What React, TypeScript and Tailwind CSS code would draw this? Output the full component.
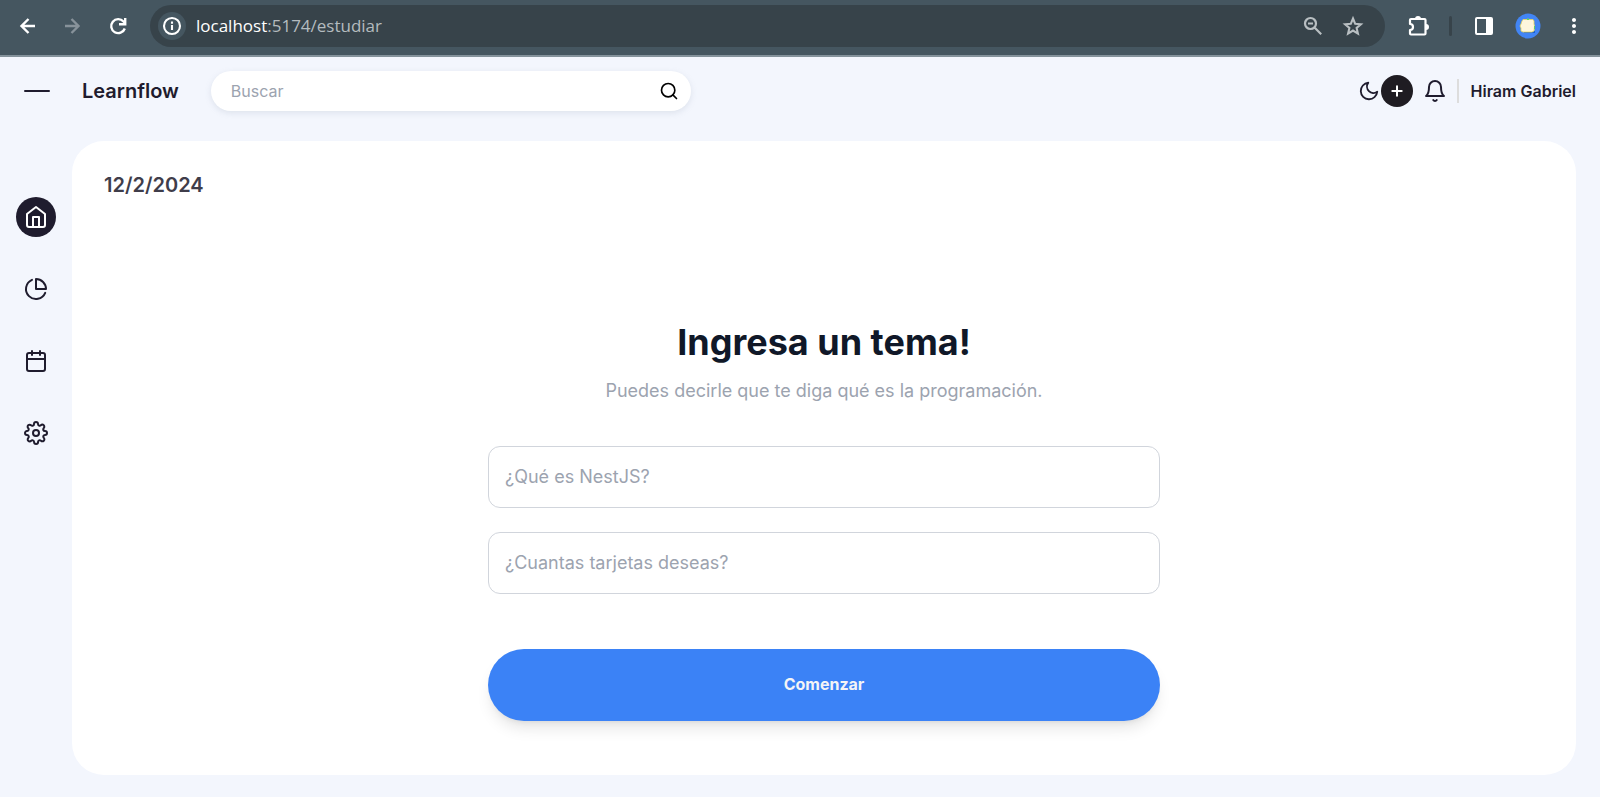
import type { ReactNode } from "react";
import { FiBell, FiCalendar, FiHome, FiMoon, FiPieChart, FiPlus, FiSearch, FiSettings } from "react-icons/fi";
import { MdMoreVert } from "react-icons/md";

function IconButton({ label, className = "", children }: { label: string; className?: string; children: ReactNode }) {
  return (
    <button type="button" aria-label={label} className={`flex shrink-0 items-center justify-center ${className}`}>
      {children}
    </button>
  );
}

function LineIcon({ d, width = 2.4 }: { d: string; width?: number }) {
  return (
    <svg width="24" height="24" viewBox="0 0 24 24" fill="none" stroke="currentColor" strokeWidth={width} aria-hidden="true">
      <path d={d} />
    </svg>
  );
}

function PuzzleIcon() {
  return (
    <svg width="24" height="24" viewBox="0 0 24 24" aria-hidden="true">
      <path d="M4 5h13.5q1 0 1 1v13.5q0 1-1 1H4q-1 0-1-1V16a3 3 0 0 0 0-6V6q0-1 1-1z" fill="none" stroke="white" strokeWidth="2.2" strokeLinejoin="round" />
      <path d="M8 5a3 3 0 0 1 6 0zM19 10a3 3 0 0 1 0 6z" fill="white" />
    </svg>
  );
}

function SidePanelIcon() {
  return (
    <svg width="18" height="18" viewBox="0 0 18 18" aria-hidden="true">
      <rect x="1" y="1" width="16" height="16" rx="1" fill="none" stroke="white" strokeWidth="2" />
      <path d="M11 1h6v16h-6z" fill="white" />
    </svg>
  );
}

function ProfileIcon() {
  return (
    <svg width="26" height="26" viewBox="0 0 26 26" aria-hidden="true">
      <circle cx="13" cy="13" r="12.5" fill="#4285f4" />
      <path d="M9 18h11v2H9z" fill="#1c62cf" />
      <path d="M7 8l1-1.500h4l1-.5 1 .5h4l1 1.500v3l.5 2-.5 5-2 1h-9l-2-1v-3l-1-2 1-2z" fill="#fdf6dc" stroke="#e8d65b" strokeWidth="0.8" />
      <path d="M12 5.500h2v1.500h-2zM19 13h1v3h-1z" fill="#5bd066" />
    </svg>
  );
}

function BrowserBar() {
  return (
    <div className="flex h-[57px] items-center border-b-2 border-[#84929b] bg-[#455660] pr-3.5 pb-1 pl-4 text-white">
      <IconButton label="Atrás" className="size-6"><LineIcon d="M19 12H6M12.500 5L5.500 12l7 7" /></IconButton>
      <IconButton label="Adelante" className="ml-5 size-6 text-[#87929a]"><LineIcon d="M5 12h13M11.500 5l7 7-7 7" /></IconButton>
      <IconButton label="Recargar" className="ml-[22px] size-6"><LineIcon d="M18.800 14.500A7 7 0 1 1 17.500 7.500L19 9M19.200 4v6.200H13" /></IconButton>
      <div className="ml-5 flex h-[42px] min-w-0 flex-1 items-center rounded-full bg-[#37434a] pr-5 pl-2">
        <IconButton label="Información del sitio" className="size-7 rounded-full bg-[#455660]">
          <LineIcon d="M12 4a8 8 0 1 0 0 16 8 8 0 1 0 0-16zM12 11v5M12 7.500v2.200" width={2.1} />
        </IconButton>
        <p className="ml-2.5 flex-1 truncate font-['Open_Sans',sans-serif] text-[17px] leading-6 text-[#b4bbbf]">
          <span className="text-white">localhost</span>:5174/estudiar
        </p>
        <IconButton label="Zoom" className="size-6 text-[#b9bfc2]">
          <LineIcon d="M9.500 4a5.500 5.500 0 1 0 0 11 5.500 5.500 0 1 0 0-11zM7 9.500h5M13.500 13.500l6.700 6.700" width={2.2} />
        </IconButton>
        <IconButton label="Añadir a favoritos" className="ml-4 size-6 text-[#b9bfc2]">
          <LineIcon d="M12 4.500l2.200 5.300 5.700.5-4.300 3.700 1.300 5.600-4.900-3-4.900 3 1.300-5.600-4.300-3.700 5.700-.5z" width={2.1} />
        </IconButton>
      </div>
      <IconButton label="Extensiones" className="ml-5 size-7"><PuzzleIcon /></IconButton>
      <span className="ml-4 h-5 w-[3px] rounded-full bg-[#37434a]" />
      <IconButton label="Panel lateral" className="ml-[22px] size-5"><SidePanelIcon /></IconButton>
      <IconButton label="Perfil" className="ml-5 size-7"><ProfileIcon /></IconButton>
      <IconButton label="Más opciones" className="ml-5 size-6"><MdMoreVert size={26} /></IconButton>
    </div>
  );
}

function Header() {
  return (
    <header className="flex items-center px-6 pt-3.5 pb-4">
      <IconButton label="Menú" className="h-10 w-[26px]"><span className="h-0.5 w-full rounded-full bg-[#1f1c2e]" /></IconButton>
      <h1 className="ml-8 text-xl leading-7 font-semibold text-[#1f1c2e]">Learnflow</h1>
      <div className="ml-8 flex h-10 w-full max-w-[480px] items-center rounded-full bg-white pr-3 pl-5 shadow-[0_2px_6px_rgba(136,148,171,0.2)]">
        <input type="search" aria-label="Buscar" placeholder="Buscar" className="min-w-0 flex-1 bg-transparent text-base outline-none placeholder:text-[#9ca3af]" />
        <IconButton label="Buscar ahora" className="size-5 text-black"><FiSearch size={20} /></IconButton>
      </div>
      <div className="ml-auto flex items-center text-[#1f1c2e]">
        <IconButton label="Modo oscuro" className="h-8 w-6"><FiMoon size={22} /></IconButton>
        <IconButton label="Agregar" className="size-8 rounded-full bg-[#1f1c22] text-white"><FiPlus size={16} strokeWidth={3} /></IconButton>
        <IconButton label="Notificaciones" className="ml-2.5 h-8 w-6"><FiBell size={24} /></IconButton>
        <button type="button" className="ml-2.5 border-l-2 border-[#dddddd] pl-3 text-base leading-6 font-semibold whitespace-nowrap">Hiram Gabriel</button>
      </div>
    </header>
  );
}

const links = [
  { label: "Inicio", Icon: FiHome, active: true },
  { label: "Estadísticas", Icon: FiPieChart, active: false },
  { label: "Calendario", Icon: FiCalendar, active: false },
  { label: "Configuración", Icon: FiSettings, active: false },
];

function Sidebar() {
  return (
    <nav aria-label="Principal" className="flex w-[72px] shrink-0 flex-col items-center gap-8 pt-14">
      {links.map(({ label, Icon, active }) => (
        <a key={label} href="#" aria-label={label} className={active ? "flex size-10 items-center justify-center rounded-full bg-[#1f1c2e] text-white" : "flex size-10 items-center justify-center text-[#1f1c2e]"}>
          <Icon size={24} strokeWidth={2} />
        </a>
      ))}
    </nav>
  );
}

const fieldClass = "h-[62px] w-full rounded-xl border border-gray-300 px-4 pb-0.5 text-lg outline-none placeholder:text-[#9ca3af]";

function TopicForm() {
  return (
    <form className="mx-auto mt-28 flex w-full max-w-2xl flex-col">
      <h2 className="text-center text-4xl leading-[58px] font-bold text-gray-900">Ingresa un tema!</h2>
      <p className="mt-1 text-center text-lg leading-8 text-[#9ca3af]">Puedes decirle que te diga qué es la programación.</p>
      <div className="mt-[39px] flex flex-col gap-6">
        <input type="text" aria-label="Tema" placeholder="¿Qué es NestJS?" className={fieldClass} />
        <input type="text" aria-label="Cantidad de tarjetas" placeholder="¿Cuantas tarjetas deseas?" className={fieldClass} />
      </div>
      <button type="button" className="mt-[55px] h-[72px] rounded-full bg-[#3b82f6] pb-0.5 text-base font-bold text-gray-100 shadow-lg">Comenzar</button>
    </form>
  );
}

export default function App() {
  return (
    <div className="flex min-h-screen flex-col bg-[#f3f6fd] font-['Inter',sans-serif]">
      <BrowserBar />
      <Header />
      <div className="flex flex-1 pt-3.5 pr-6 pb-[22px]">
        <Sidebar />
        <main className="min-w-0 flex-1 rounded-[32px] bg-white p-8 pt-7">
          <time dateTime="2024-02-12" className="block text-xl leading-8 font-semibold text-[#3f3d4a]">12/2/2024</time>
          <TopicForm />
        </main>
      </div>
    </div>
  );
}
